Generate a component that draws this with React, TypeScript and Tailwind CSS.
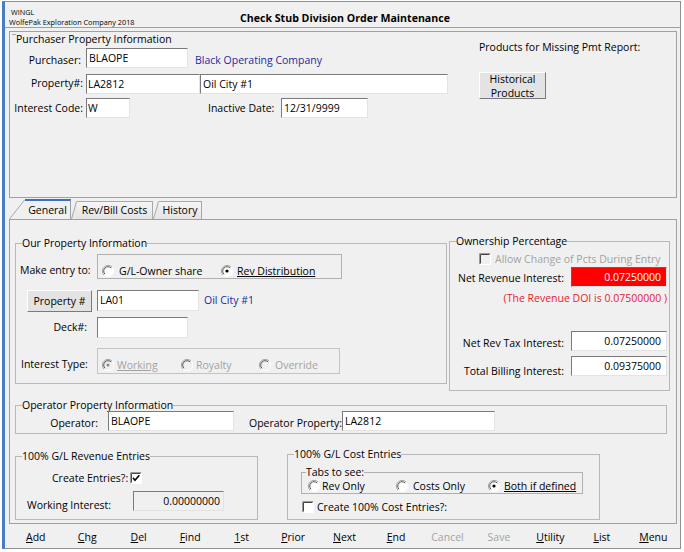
import React from "react";

const inp =
  "bg-white border border-t-[#7a7a7a] border-l-[#7a7a7a] border-r-[#e3e3e3] border-b-[#e3e3e3] whitespace-nowrap overflow-hidden";

function Radio({ checked = false, disabled = false }: { checked?: boolean; disabled?: boolean }) {
  return (
    <svg width="12" height="12" viewBox="0 0 12 12" className="shrink-0">
      <circle cx="6" cy="6" r="5.4" fill={disabled ? "#f0f0f0" : "#ffffff"} />
      <path d="M10.1 2.1 A5.4 5.4 0 0 0 2.1 10.1" fill="none" stroke="#a0a0a0" strokeWidth="1" />
      <path d="M9.2 3 A4.3 4.3 0 0 0 3 9.2" fill="none" stroke="#555555" strokeWidth="1" />
      <path d="M2.1 10.1 A5.4 5.4 0 0 0 10.1 2.1" fill="none" stroke="#ffffff" strokeWidth="1" />
      {checked && <circle cx="6" cy="6" r="1.6" fill={disabled ? "#8a8a8a" : "#000000"} />}
    </svg>
  );
}

function Check({ checked = false, disabled = false }: { checked?: boolean; disabled?: boolean }) {
  return (
    <svg width="12" height="12" viewBox="0 0 12 12" className="shrink-0">
      <rect x="0" y="0" width="12" height="12" fill={disabled ? "#f0f0f0" : "#ffffff"} />
      <path d="M0.5 11.5 V0.5 H11.5" fill="none" stroke="#9a9a9a" strokeWidth="1" />
      <path d="M1.5 10.5 V1.5 H10.5" fill="none" stroke="#444444" strokeWidth="1" />
      <path d="M0.5 11.5 H11.5 V0.5" fill="none" stroke="#ffffff" strokeWidth="1" />
      {checked && (
        <path d="M3 5.8 L5 8.2 L9.3 3.3" fill="none" stroke="#000000" strokeWidth="1.6" />
      )}
    </svg>
  );
}

function Slant({ w, h }: { w: number; h: number }) {
  return (
    <svg width={w} height={h} viewBox={`0 0 ${w} ${h}`} className="shrink-0">
      <path d={`M0 ${h} L${w} 0 L${w} ${h} Z`} fill="#e9e9e9" />
      <path d={`M0.5 ${h} L${w - 0.5} 0.5`} fill="none" stroke="#a8a8a8" strokeWidth="1" />
    </svg>
  );
}

export default function App() {
  const menu: { k: string; rest: string; dis?: boolean }[] = [
    { k: "A", rest: "dd" },
    { k: "C", rest: "hg" },
    { k: "D", rest: "el" },
    { k: "F", rest: "ind" },
    { k: "1", rest: "st" },
    { k: "P", rest: "rior" },
    { k: "N", rest: "ext" },
    { k: "E", rest: "nd" },
    { k: "C", rest: "ancel", dis: true },
    { k: "S", rest: "ave", dis: true },
    { k: "U", rest: "tility" },
    { k: "L", rest: "ist" },
    { k: "M", rest: "enu" },
  ];

  return (
    <div className="w-[684px] h-[552px] bg-white overflow-hidden font-['Open_Sans',sans-serif] text-[10.5px] leading-[14px] text-black">
      <div className="ml-[2px] mt-[1px] w-[679px] h-[548px] border border-[#8f8f8f] border-l-[3px] border-l-[#4a7cc2] bg-[#f0f0f0] flex flex-col">
        {/* header */}
        <div className="h-[26px] shrink-0 border-b border-[#a0a0a0] flex">
          <div className="w-[130px] pl-[4px] pt-[5px] text-[7.3px] leading-[10px] whitespace-nowrap">
            <div className="pl-[2px]">WINGL</div>
            <div>WolfePak Exploration Company 2018</div>
          </div>
          <div className="ml-[105px] mt-[8px] text-[10.6px] leading-[16px] font-bold whitespace-nowrap">
            Check Stub Division Order Maintenance
          </div>
        </div>

        {/* purchaser panel */}
        <div className="mt-[3px] ml-[4px] w-[668px] h-[167px] shrink-0 border border-[#a0a0a0] flex">
          <div className="w-[469px] flex flex-col">
            <div className="flex h-[14px]">
              <div className="ml-[2px] mt-[2px] w-[4px] h-px bg-[#a8a8a8]" />
              <div className="whitespace-nowrap">Purchaser Property Information</div>
            </div>
            <div className="mt-[2px] flex items-start">
              <div className="w-[73px] mt-[5px] text-right pr-[2px]">Purchaser:</div>
              <div className={`${inp} ml-[3px] w-[102px] h-[20px] leading-[18px] pl-[2px]`}>BLAOPE</div>
              <div className="ml-[7px] mt-[5px] text-[#1f2a9c] whitespace-nowrap">Black Operating Company</div>
            </div>
            <div className="mt-[6px] flex items-start">
              <div className="w-[73px] mt-[2px] text-right">Property#:</div>
              <div className={`${inp} ml-[3px] w-[114px] h-[20px] leading-[18px] pl-[1px]`}>LA2812</div>
              <div className={`${inp} w-[248px] h-[20px] leading-[18px] pl-[2px]`}>Oil City #1</div>
            </div>
            <div className="mt-[4px] flex items-start">
              <div className="w-[73px] mt-[3px] text-right whitespace-nowrap">Interest Code:</div>
              <div className={`${inp} ml-[3px] w-[44px] h-[20px] leading-[18px] pl-[1px]`}>W</div>
              <div className="ml-[78px] w-[73px] mt-[3px] whitespace-nowrap">Inactive Date:</div>
              <div className={`${inp} w-[87px] h-[20px] leading-[18px] pl-[2px]`}>12/31/9999</div>
            </div>
          </div>
          <div className="flex flex-col items-start">
            <div className="mt-[8px] whitespace-nowrap">Products for Missing Pmt Report:</div>
            <div className="mt-[18px] w-[67px] h-[27px] bg-[#e3e3e3] border border-t-white border-l-white border-r-[#7a7a7a] border-b-[#7a7a7a] flex flex-col items-center justify-center leading-[14px]">
              <div className="shrink-0">Historical</div>
              <div className="shrink-0">Products</div>
            </div>
          </div>
        </div>

        {/* tabs */}
        <div className="ml-[4px] mt-px h-[20px] shrink-0 flex items-end">
          <svg width="16" height="20" viewBox="0 0 16 20" className="shrink-0">
            <path d="M0.5 20 L15.5 1" fill="none" stroke="#a8a8a8" strokeWidth="1" />
          </svg>
          <div className="w-[46px] h-[20px] border-t-2 border-t-[#3a6fc7] border-r border-r-[#a0a0a0] pt-[2px] text-center">
            General
          </div>
          <Slant w={6} h={18} />
          <div className="w-[76px] h-[18px] bg-linear-to-b from-[#f6f6f6] to-[#e3e3e3] border-t border-r border-[#a8a8a8] pt-[1px] text-center whitespace-nowrap">
            Rev/Bill Costs
          </div>
          <Slant w={6} h={18} />
          <div className="w-[43px] h-[18px] bg-linear-to-b from-[#f6f6f6] to-[#e3e3e3] border-t border-r border-[#a8a8a8] pt-[1px] text-center">
            History
          </div>
        </div>

        {/* tab panel */}
        <div className="ml-[4px] w-[668px] h-[305px] shrink-0 border border-[#a0a0a0] flex flex-col">
          <div className="flex items-start">
            {/* Our Property Information */}
            <fieldset className="ml-[5px] mt-[16px] w-[432px] h-[148px] border border-[#b8b8b8]">
              <legend className="ml-[6px] leading-[14px]">Our Property Information</legend>
              <div className="mt-[4px] flex items-start">
                <div className="w-[81px] pl-[4px] mt-[9px] whitespace-nowrap">Make entry to:</div>
                <div className="w-[245px] h-[25px] border border-[#b0b0b0] pt-[8px] flex">
                  <div className="ml-[4px] w-[119px] flex items-center">
                    <Radio />
                    <span className="ml-[5px] whitespace-nowrap">G/L-Owner share</span>
                  </div>
                  <div className="flex items-center">
                    <Radio checked />
                    <span className="ml-[4px] underline whitespace-nowrap">Rev Distribution</span>
                  </div>
                </div>
              </div>
              <div className="mt-[11px] flex items-start">
                <div className="ml-[11px] w-[65px] h-[22px] bg-[#e3e3e3] border border-t-white border-l-white border-r-[#7a7a7a] border-b-[#7a7a7a] leading-[20px] text-center">
                  Property #
                </div>
                <div className={`${inp} ml-[5px] w-[102px] h-[21px] leading-[19px] pl-[2px]`}>LA01</div>
                <div className="ml-[5px] mt-[3px] text-[#1f2a9c] whitespace-nowrap">Oil City #1</div>
              </div>
              <div className="mt-[5px] flex items-start">
                <div className="w-[81px] pr-[10px] mt-[3px] text-right">Deck#:</div>
                <div className={`${inp} w-[91px] h-[21px]`} />
              </div>
              <div className="mt-[10px] flex items-start">
                <div className="w-[81px] pl-[5px] mt-[9px] whitespace-nowrap">Interest Type:</div>
                <div className="w-[243px] h-[26px] border border-[#c4c4c4] pt-[8px] flex text-[#a3a3a3]">
                  <div className="ml-[4px] w-[79px] flex items-center">
                    <Radio checked disabled />
                    <span className="ml-[3px] underline">Working</span>
                  </div>
                  <div className="w-[78px] flex items-center">
                    <Radio disabled />
                    <span className="ml-[3px]">Royalty</span>
                  </div>
                  <div className="flex items-center">
                    <Radio disabled />
                    <span className="ml-[4px]">Override</span>
                  </div>
                </div>
              </div>
            </fieldset>

            {/* Ownership Percentage */}
            <fieldset className="ml-[2px] mt-[14px] w-[221px] h-[157px] border border-[#b8b8b8]">
              <legend className="ml-[6px] leading-[14px]">Ownership Percentage</legend>
              <div className="mt-[4px] ml-[29px] flex items-center">
                <Check disabled />
                <span className="ml-[4px] text-[#a3a3a3] whitespace-nowrap">Allow Change of Pcts During Entry</span>
              </div>
              <div className="mt-[1px] flex items-start">
                <div className="w-[114px] mt-[4px] text-right whitespace-nowrap">Net Revenue Interest:</div>
                <div className="ml-[7px] w-[96px] h-[20px] bg-[#ff0000] border border-t-[#8a5050] border-l-[#8a5050] border-r-[#e3e3e3] border-b-[#e3e3e3] text-white text-right pr-[5px] leading-[18px]">
                  0.07250000
                </div>
              </div>
              <div className="mt-[4px] pr-[2px] text-right text-[#e8232f] whitespace-nowrap">
                (The Revenue DOI is 0.07500000 )
              </div>
              <div className="mt-[26px] flex items-start">
                <div className="w-[114px] mt-[5px] text-right whitespace-nowrap">Net Rev Tax Interest:</div>
                <div className={`${inp} ml-[7px] w-[96px] h-[20px] leading-[18px] text-right pr-[5px]`}>0.07250000</div>
              </div>
              <div className="mt-[5px] flex items-start">
                <div className="w-[114px] mt-[8px] text-right whitespace-nowrap">Total Billing Interest:</div>
                <div className={`${inp} ml-[7px] w-[96px] h-[20px] leading-[18px] text-right pr-[5px]`}>0.09375000</div>
              </div>
            </fieldset>
          </div>

          {/* Operator Property Information */}
          <fieldset className="ml-[5px] mt-[8px] w-[652px] h-[35px] border border-[#b8b8b8]">
            <legend className="ml-[6px] leading-[12px]">Operator Property Information</legend>
            <div className="flex items-start">
              <div className="w-[82px] mt-[5px] text-right">Operator:</div>
              <div className={`${inp} ml-[10px] w-[126px] h-[20px] leading-[18px] pl-[2px]`}>BLAOPE</div>
              <div className="w-[108px] mt-[5px] text-right whitespace-nowrap">Operator Property:</div>
              <div className={`${inp} w-[153px] h-[20px] leading-[18px] pl-[2px]`}>LA2812</div>
            </div>
          </fieldset>

          <div className="flex items-start">
            {/* 100% G/L Revenue Entries */}
            <fieldset className="ml-[5px] mt-[15px] w-[243px] h-[71px] border border-[#b8b8b8]">
              <legend className="ml-[6px] leading-[14px]">100% G/L Revenue Entries</legend>
              <div className="mt-[8px] ml-[36px] flex items-center">
                <span className="whitespace-nowrap">Create Entries?:</span>
                <span className="ml-[2px]">
                  <Check checked />
                </span>
              </div>
              <div className="mt-[6px] flex items-start">
                <div className="w-[117px] pl-[11px] mt-[7px] whitespace-nowrap">Working Interest:</div>
                <div className="w-[91px] h-[20px] bg-[#f0f0f0] border border-t-[#7a7a7a] border-l-[#7a7a7a] border-r-[#e3e3e3] border-b-[#e3e3e3] leading-[18px] text-right pr-[3px]">
                  0.00000000
                </div>
              </div>
            </fieldset>

            {/* 100% G/L Cost Entries */}
            <fieldset className="ml-[29px] mt-[13px] w-[313px] h-[73px] border border-[#b8b8b8]">
              <legend className="ml-[6px] leading-[14px]">100% G/L Cost Entries</legend>
              <fieldset className="ml-[13px] mt-[6px] w-[282px] h-[27px] border border-[#b0b0b0]">
                <legend className="ml-[4px] leading-[10px]">Tabs to see:</legend>
                <div className="mt-[2px] pl-[6px] flex leading-[14px]">
                  <div className="w-[88px] flex items-center">
                    <Radio />
                    <span className="ml-[2px] whitespace-nowrap">Rev Only</span>
                  </div>
                  <div className="w-[92px] flex items-center">
                    <Radio />
                    <span className="ml-[5px] whitespace-nowrap">Costs Only</span>
                  </div>
                  <div className="flex items-center">
                    <Radio checked />
                    <span className="ml-[4px] underline whitespace-nowrap">Both if defined</span>
                  </div>
                </div>
              </fieldset>
              <div className="mt-[6px] ml-[14px] flex items-center">
                <Check />
                <span className="ml-[3px] whitespace-nowrap">Create 100% Cost Entries?:</span>
              </div>
            </fieldset>
          </div>
        </div>

        {/* bottom command bar */}
        <div className="ml-[5px] w-[669px] pt-[6px] flex">
          {menu.map((m, i) => (
            <div key={i} className={`flex-1 text-center ${m.dis ? "text-[#a3a3a3]" : ""}`}>
              {m.dis ? (
                <span>
                  {m.k}
                  {m.rest}
                </span>
              ) : (
                <span>
                  <span className="underline">{m.k}</span>
                  {m.rest}
                </span>
              )}
            </div>
          ))}
        </div>
      </div>
    </div>
  );
}
